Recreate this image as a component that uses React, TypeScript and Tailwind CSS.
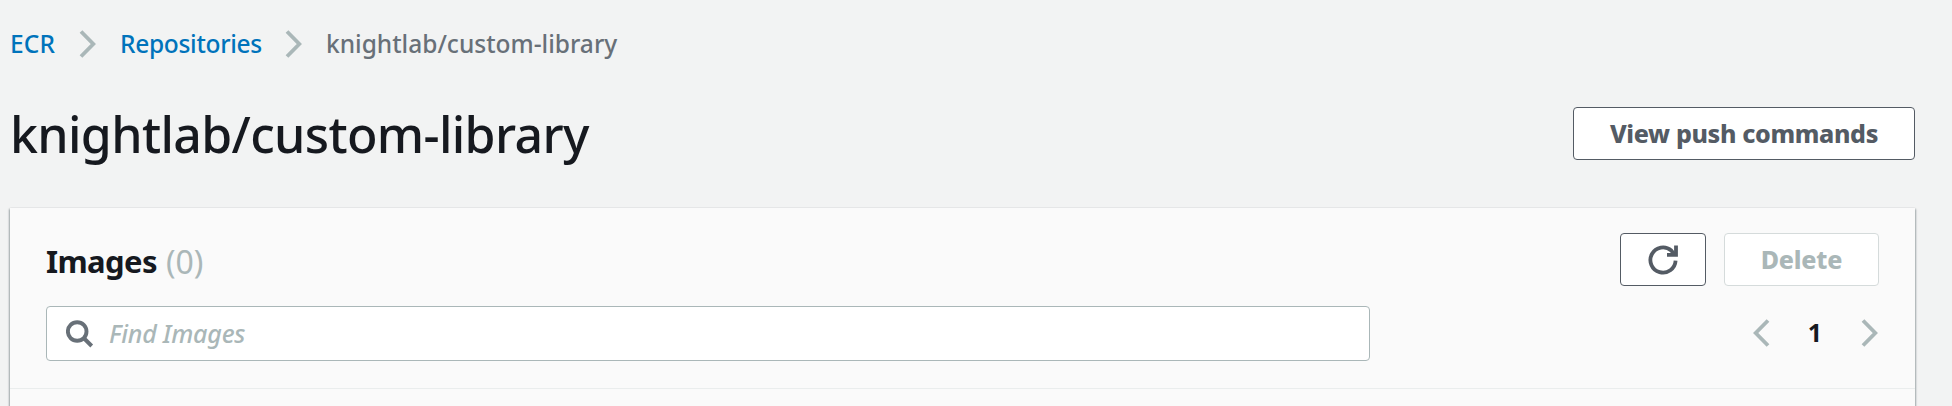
import type { ReactNode } from "react";

function Chevron({ direction = "right" }: { direction?: "left" | "right" }) {
  return (
    <svg
      width="18"
      height="28"
      viewBox="0 0 18 28"
      fill="none"
      stroke="#aab7b8"
      strokeWidth="3.8"
      className={direction === "left" ? "block -scale-x-100" : "block"}
    >
      <path d="M2 1.5 14.3 14 2 26.5" />
    </svg>
  );
}

function RefreshIcon() {
  return (
    <svg width="30" height="30" viewBox="0 0 30 30" fill="none" stroke="#545b64" strokeWidth="3.8">
      <path d="M27.6 15.7A12.6 12.6 0 1 1 23.3 5.5L26.6 9.7" />
      <path d="M28 0.5V9.8H19" />
    </svg>
  );
}

function SearchIcon() {
  return (
    <svg width="28" height="28" viewBox="0 0 28 28" fill="none" stroke="#687078" strokeWidth="3.9" className="block">
      <circle cx="11.2" cy="11.5" r="9.3" />
      <path d="M17.7 18 25.7 26" />
    </svg>
  );
}

function Button({ children, className }: { children: ReactNode; className: string }) {
  return (
    <button
      type="button"
      className={`flex h-[53px] items-center justify-center rounded-[4px] border bg-white text-[25px] leading-none font-extrabold ${className}`}
    >
      {children}
    </button>
  );
}

export default function App() {
  return (
    <div className="h-[406px] w-full overflow-hidden bg-[#f2f3f3] pr-[37px] pl-[10px] font-['Noto_Sans',sans-serif] text-[#16191f]">
      <nav className="flex h-[87px] items-center text-[24.5px] leading-none font-medium whitespace-nowrap">
        <a className="w-[69px] pt-0.5 tracking-[0.1px] text-[#0073bb]">ECR</a>
        <Chevron />
        <a className="ml-[23px] w-[165px] pt-0.5 tracking-[-0.3px] text-[#0073bb]">Repositories</a>
        <Chevron />
        <span className="ml-[23px] pt-0.5 text-[#687078]">knightlab/custom-library</span>
      </nav>

      <header className="flex h-[121px] items-start justify-between pt-5">
        <h1 className="h-[55px] text-[50px] leading-[55px] font-medium tracking-[-0.65px] whitespace-nowrap">
          knightlab/custom-library
        </h1>
        <Button className="w-[342px] border-[#545b64] tracking-[-0.35px] text-[#545b64]">View push commands</Button>
      </header>

      <section className="h-[220px] bg-[#fafafa] shadow-[0_1px_2px_rgba(0,28,36,0.4),1px_1px_2px_rgba(0,28,36,0.2),-1px_1px_2px_rgba(0,28,36,0.2)]">
        <div className="h-[181px] border-b border-[#eaeded] pt-[25px] pr-[36px] pl-9">
          <div className="flex h-[53px] items-center justify-between">
            <h2 className="flex gap-[9px] pt-[3px] leading-none">
              <span className="text-[31px] font-bold tracking-[-0.6px]">Images</span>
              <span className="text-[32px] leading-[31px] text-[#aab7b8]">(0)</span>
            </h2>
            <div className="flex gap-[18px]">
              <Button className="w-[86px] border-[#545b64]">
                <RefreshIcon />
              </Button>
              <Button className="w-[155px] border-[#d5dbdb] tracking-[-0.2px] text-[#aab7b8]">Delete</Button>
            </div>
          </div>
          <div className="mt-5 flex h-[55px] items-center justify-between">
            <div className="flex h-[55px] w-[1324px] items-center gap-[15px] rounded-[4px] border border-[#aab7b8] bg-white pl-[19px]">
              <SearchIcon />
              <input
                className="mb-0.5 w-[1200px] bg-transparent text-[25px] leading-none font-medium tracking-[-0.2px] italic outline-none placeholder:text-[#aab7b8]"
                placeholder="Find Images"
              />
            </div>
            <div className="mb-0.5 flex h-[53px] items-center">
              <Chevron direction="left" />
              <span className="w-[91px] pr-px text-center text-[25px] leading-none font-bold">1</span>
              <Chevron />
            </div>
          </div>
        </div>
      </section>
    </div>
  );
}
